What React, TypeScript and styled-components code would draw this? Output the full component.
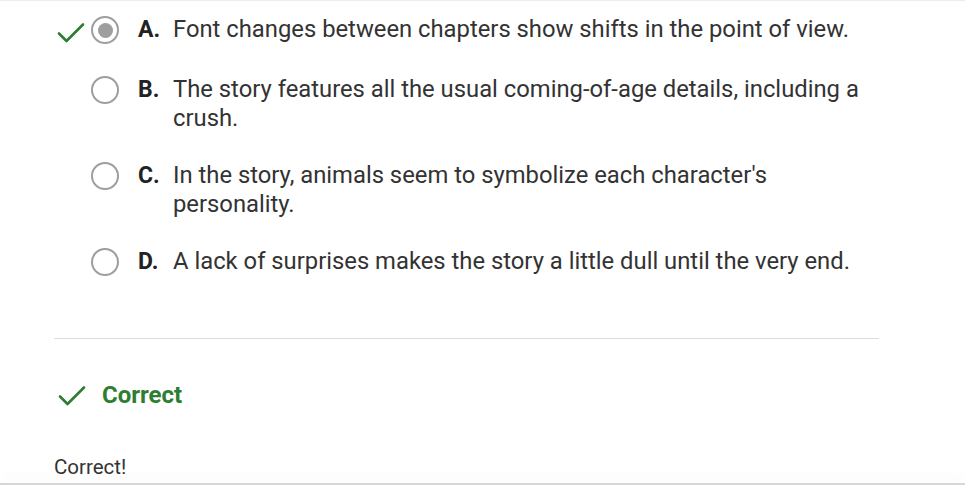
import React from 'react';
import styled, { createGlobalStyle } from 'styled-components';

const GlobalStyle = createGlobalStyle`
  html, body {
    margin: 0;
    padding: 0;
    background: #ffffff;
    font-family: Roboto, "Noto Sans", Arial, sans-serif;
    color: #2b2b2b;
    overflow: hidden;
  }
`;

const Page = styled.div`
  width: 965px;
  height: 485px;
  position: relative;
  overflow: hidden;
  border-top: 1px solid #ececec;
  box-sizing: border-box;
`;

const Content = styled.div`
  width: 825px;
  margin-left: 54px;
  padding-top: 14px;
`;

const OptionList = styled.div`
  display: flex;
  flex-direction: column;
  gap: 28px;
  padding-bottom: 59px;
  border-bottom: 1px solid #dcdcdc;
`;

const OptionRow = styled.div`
  display: flex;
  align-items: flex-start;
  padding-left: 3px;
  font-size: 23.8px;
  line-height: 29px;
  color: #333;
`;

const CheckSlot = styled.div`
  width: 28px;
  height: 29px;
  display: flex;
  align-items: center;
  justify-content: center;
  margin-top: 3px;
`;

const Radio = styled.div<{ $selected?: boolean }>`
  width: 28px;
  height: 28px;
  margin: 1px 0 0 6px;
  flex: 0 0 auto;
  box-sizing: border-box;
  border: 2.5px solid #9e9e9e;
  border-radius: 50%;
  display: flex;
  align-items: center;
  justify-content: center;

  &::after {
    content: '';
    display: ${(p) => (p.$selected ? 'block' : 'none')};
    width: 15px;
    height: 15px;
    border-radius: 50%;
    background: #9e9e9e;
  }
`;

const Letter = styled.span`
  width: 35px;
  margin-left: 19px;
  flex: 0 0 auto;
  font-weight: 700;
  font-size: 23px;
  color: #222;
`;

const OptionText = styled.span`
  flex: 1;
  padding-right: 10px;
`;

const Feedback = styled.div`
  display: flex;
  align-items: center;
  gap: 16px;
  margin-top: 42px;
  padding-left: 4px;
  color: #2e7d32;
  font-size: 24px;
  line-height: 29px;
  font-weight: 700;
`;

const Explanation = styled.div`
  margin-top: 45px;
  font-size: 20.5px;
  line-height: 24px;
  color: #333;
`;

const BottomBar = styled.div`
  position: absolute;
  left: 0;
  right: 0;
  bottom: 0;
  height: 2px;
  background: #d6d6d6;
  box-shadow: 0 -6px 10px rgba(0, 0, 0, 0.06);
`;

const Check = ({ size = 28 }: { size?: number }) => (
  <svg width={size} height={size * 0.75} viewBox="0 0 28 21" fill="none">
    <path d="M2 11.5 L9.5 19 L26 2.5" stroke="#2e7d32" strokeWidth="2.6" strokeLinecap="round" strokeLinejoin="round" />
  </svg>
);

const options = [
  { letter: 'A.', text: 'Font changes between chapters show shifts in the point of view.', selected: true },
  { letter: 'B.', text: 'The story features all the usual coming-of-age details, including a crush.' },
  { letter: 'C.', text: "In the story, animals seem to symbolize each character's personality." },
  { letter: 'D.', text: 'A lack of surprises makes the story a little dull until the very end.' },
];

export default function App() {
  return (
    <>
      <GlobalStyle />
      <Page>
        <Content>
          <OptionList>
            {options.map((o) => (
              <OptionRow key={o.letter}>
                <CheckSlot>{o.selected && <Check />}</CheckSlot>
                <Radio $selected={o.selected} />
                <Letter>{o.letter}</Letter>
                <OptionText>{o.text}</OptionText>
              </OptionRow>
            ))}
          </OptionList>
          <Feedback>
            <Check />
            <span>Correct</span>
          </Feedback>
          <Explanation>Correct!</Explanation>
        </Content>
        <BottomBar />
      </Page>
    </>
  );
}
